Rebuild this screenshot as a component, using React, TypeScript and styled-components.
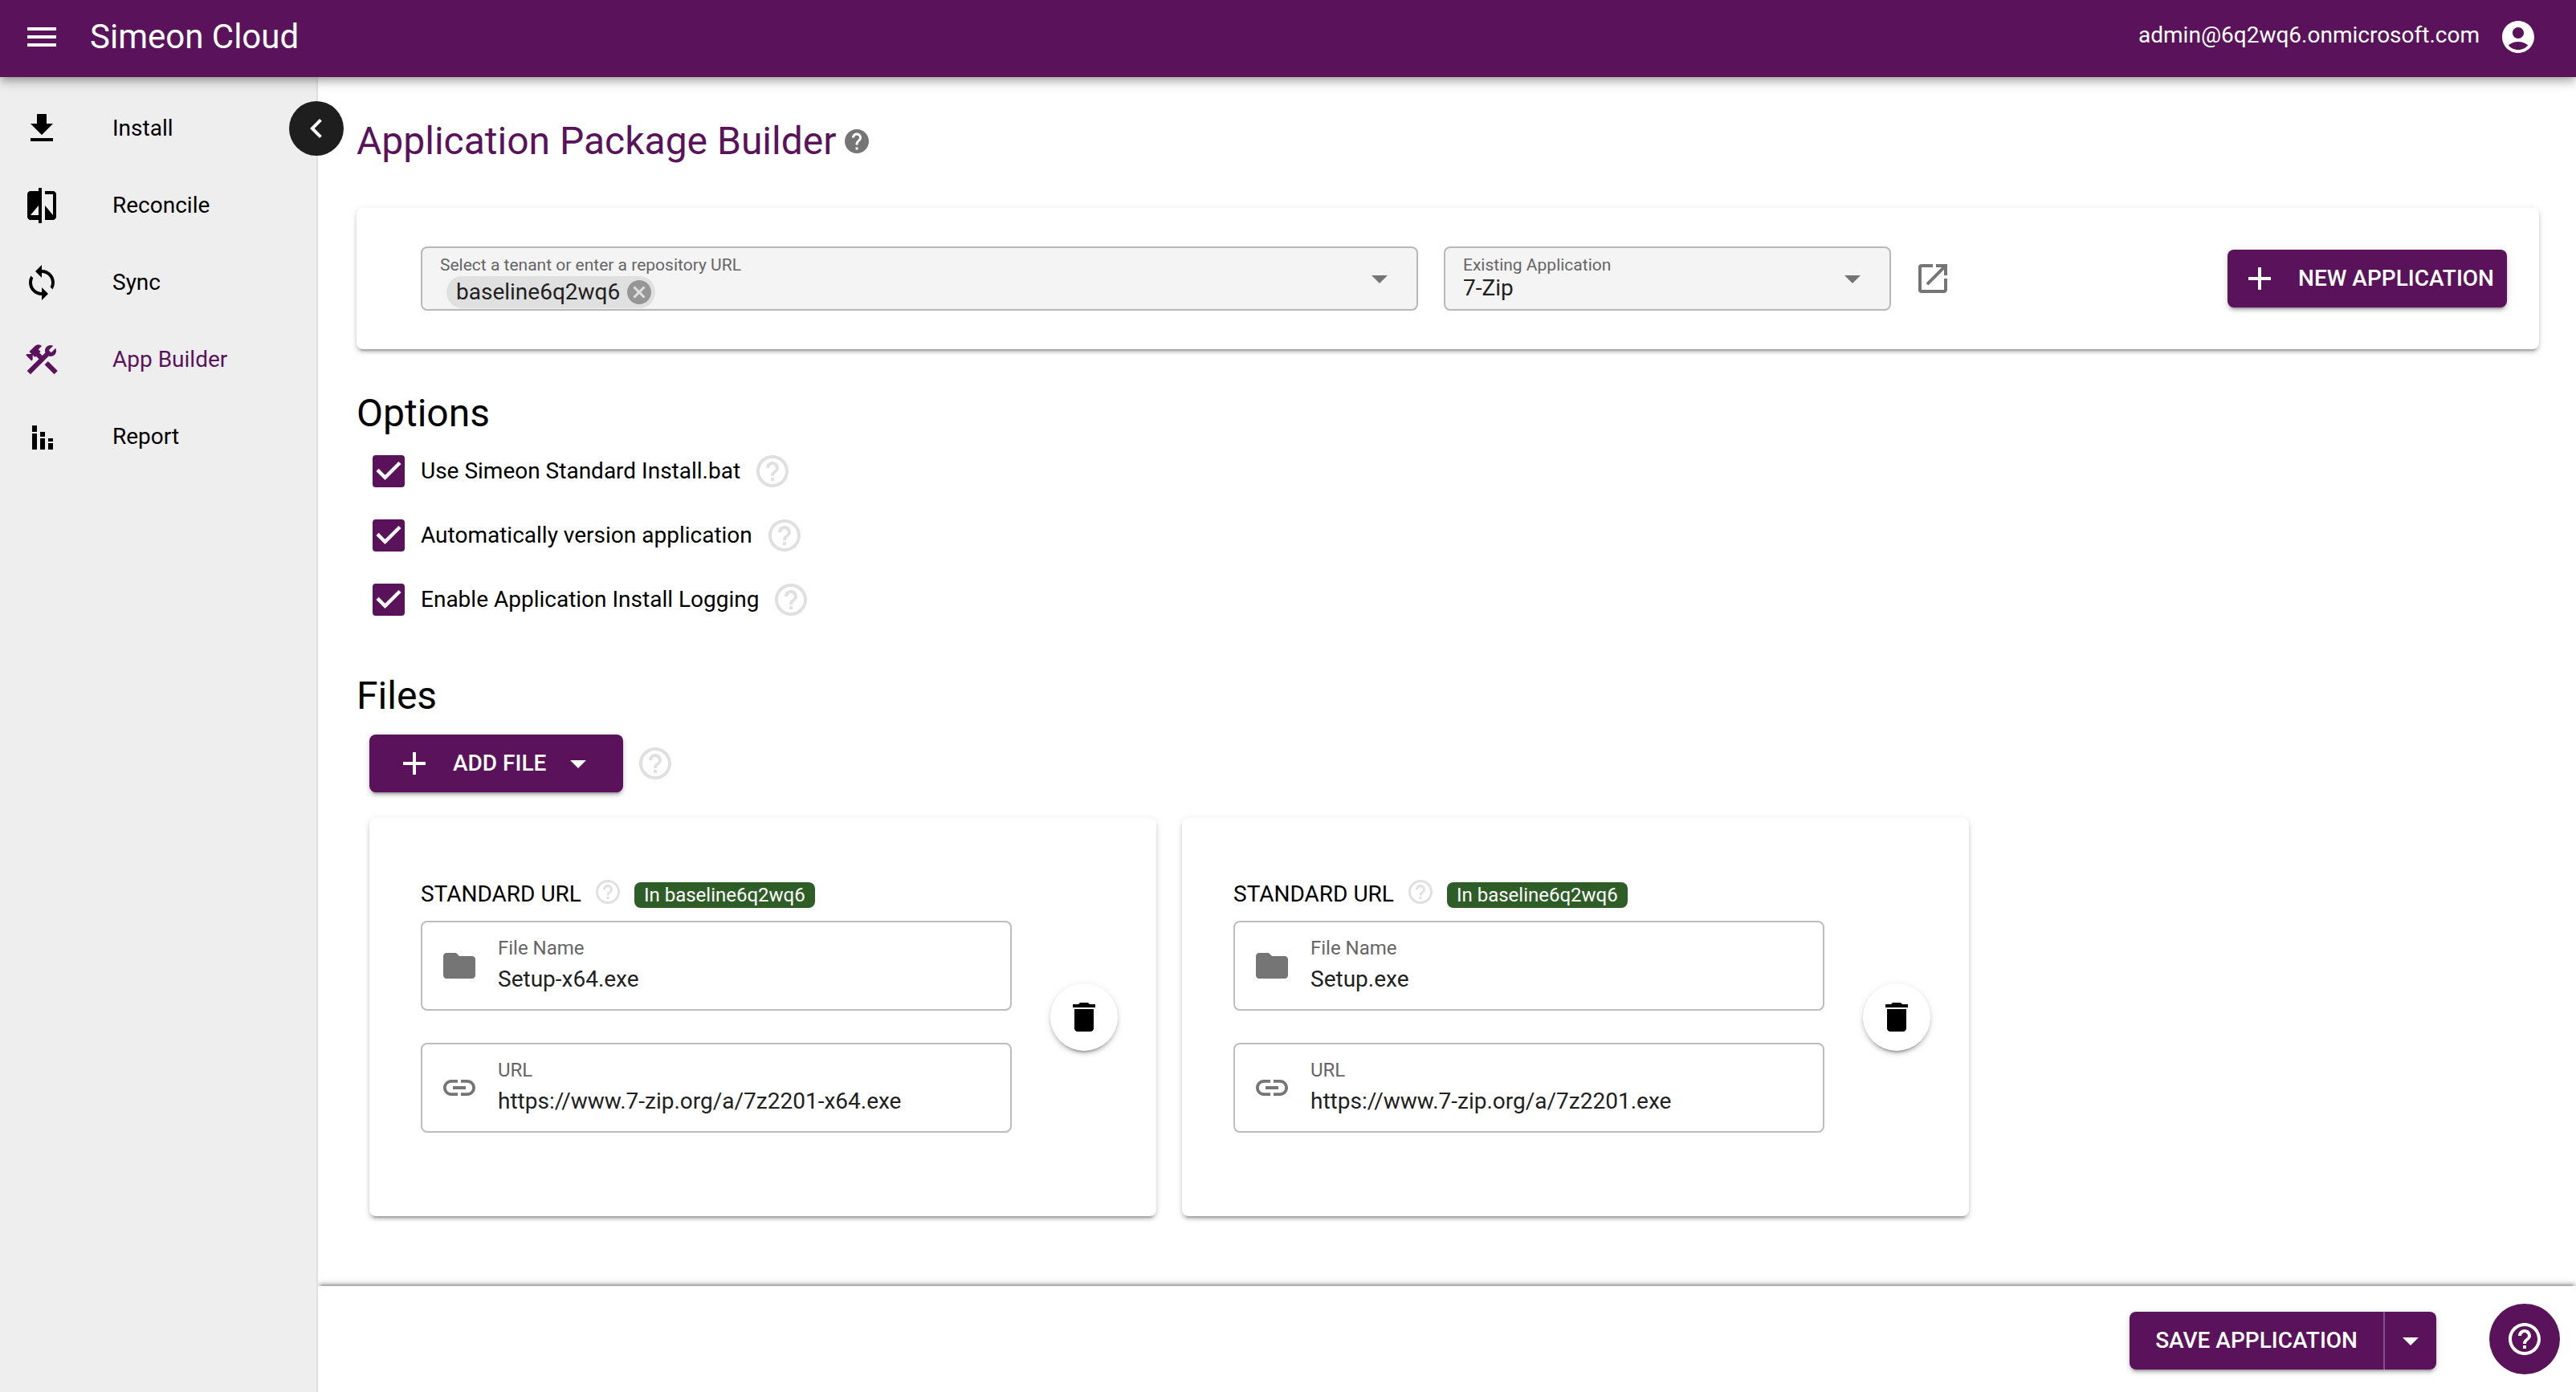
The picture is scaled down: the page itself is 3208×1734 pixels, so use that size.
import React, { useId, useState } from "react";
import styled, { createGlobalStyle, css } from "styled-components";
import {
  MdAccountCircle,
  MdAdd,
  MdArrowDropDown,
  MdCancel,
  MdChevronLeft,
  MdCompare,
  MdConstruction,
  MdDelete,
  MdFolder,
  MdHelp,
  MdHelpOutline,
  MdLink,
  MdMenu,
  MdOpenInNew,
  MdSync,
} from "react-icons/md";

const purple = "#5a135b";
const font = `Roboto, "Liberation Sans", sans-serif`;
const raised =
  "0 6px 2px -4px rgba(0,0,0,.2), 0 4px 4px 0 rgba(0,0,0,.14), 0 2px 10px 0 rgba(0,0,0,.12)";

const GlobalStyle = createGlobalStyle`
  *, *::before, *::after { box-sizing: border-box; }
  body { margin: 0; background: #fff; color: #000; font: 400 28px/36px ${font}; }
  svg { display: block; flex: none; }
  button, input, select { font: inherit; color: inherit; }
  button { cursor: pointer; }
`;

const Page = styled.div`
  min-height: 100vh;
  display: flex;
  flex-direction: column;
`;

const AppBar = styled.header`
  position: sticky;
  top: 0;
  z-index: 2;
  height: 96px;
  flex: none;
  display: flex;
  align-items: center;
  padding: 0 48px 4px 28px;
  background: ${purple};
  color: #fff;
  box-shadow: 0 4px 8px -2px rgba(0, 0, 0, 0.2), 0 8px 10px 0 rgba(0, 0, 0, 0.14),
    0 2px 20px 0 rgba(0, 0, 0, 0.12);
`;

const BareButton = styled.button`
  display: flex;
  padding: 0;
  border: 0;
  background: none;
`;

const Brand = styled.span`
  margin-left: 36px;
  font-size: 42px;
  line-height: 56px;
`;

const Account = styled.div`
  margin-left: auto;
  display: flex;
  align-items: center;
  gap: 24px;
`;

const Email = styled.span`
  padding-bottom: 4px;
`;

const Body = styled.div`
  flex: 1;
  display: flex;
`;

const Sidebar = styled.aside`
  position: relative;
  width: 396px;
  flex: none;
  padding-top: 16px;
  background: #eee;
  border-right: 2px solid #e0e0e0;
`;

const NavLink = styled.a<{ $active?: boolean }>`
  height: 96px;
  display: flex;
  align-items: center;
  gap: 64px;
  padding: 0 28px;
  color: ${(p) => (p.$active ? purple : "#000")};
  text-decoration: none;
`;

const CollapseButton = styled.button`
  position: absolute;
  top: 30px;
  right: -34px;
  z-index: 1;
  width: 68px;
  height: 68px;
  display: grid;
  place-items: center;
  padding: 0;
  border: 0;
  border-radius: 50%;
  background: #1e1e1e;
  color: #fff;
`;

const Workspace = styled.div`
  flex: 1;
  min-width: 0;
  display: flex;
  flex-direction: column;
`;

const Main = styled.main`
  flex: 1;
  padding: 48px 46px 48px 48px;
`;

const TitleRow = styled.div`
  display: flex;
  align-items: center;
  gap: 8px;
  margin-bottom: 51px;
  color: #757575;
`;

const Title = styled.h1`
  margin: 0;
  font-size: 48px;
  line-height: 64px;
  font-weight: 400;
  color: ${purple};
`;

const SectionTitle = styled.h2`
  margin: 48px 0 0;
  font-size: 48px;
  line-height: 64px;
  font-weight: 400;
`;

const surface = css`
  background: #fff;
  border-radius: 8px;
  box-shadow: ${raised};
`;

const Picker = styled.section`
  ${surface}
  display: flex;
  align-items: center;
  padding: 48px 40px 48px 80px;
`;

const PickerField = styled.div<{ $basis: number }>`
  flex: 0 1 ${(p) => p.$basis}px;
  min-width: 0;
  height: 80px;
  display: flex;
  align-items: center;
  padding: 0 22px;
  border: 2px solid #b8b8b8;
  border-radius: 8px;
  background: #f4f4f4;
  color: #757575;

  & + & {
    margin-left: 32px;
  }
`;

const PickerText = styled.div`
  flex: 1;
  min-width: 0;
  align-self: flex-start;
  display: flex;
  flex-direction: column;
  padding-top: 7px;
`;

const PickerLabel = styled.label`
  font-size: 21px;
  line-height: 28px;
  color: #666;
`;

const ChipRow = styled.div`
  display: flex;
  padding-left: 8px;
`;

const Chip = styled.span`
  height: 40px;
  display: flex;
  align-items: center;
  gap: 6px;
  padding: 0 2px 0 12px;
  border-radius: 20px;
  background: #e0e0e0;
  color: #212121;
`;

const ChipRemove = styled(BareButton)`
  color: #969696;
`;

const textControl = css`
  min-width: 0;
  padding: 0;
  border: 0;
  outline: 0;
  background: none;
  color: #212121;
`;

const ChipInput = styled.input`
  ${textControl}
  flex: 1;
  height: 40px;
`;

const PlainSelect = styled.select`
  ${textControl}
  appearance: none;
  height: 30px;
  line-height: 30px;
`;

const OpenLink = styled.a`
  margin-left: 28px;
  color: #757575;
`;

const Button = styled.button<{ $wide?: boolean }>`
  height: 72px;
  display: flex;
  align-items: center;
  gap: 24px;
  padding: 0 ${(p) => (p.$wide ? 32 : 16)}px;
  border: 0;
  border-radius: 8px;
  background: ${purple};
  color: #fff;
  font-weight: 500;
  white-space: nowrap;
  box-shadow: ${raised};
`;

const NewButton = styled(Button)`
  margin-left: auto;
`;

const WithCaret = styled.span`
  display: flex;
  align-items: center;
  gap: 16px;
`;

const OptionRow = styled.div`
  height: 80px;
  display: flex;
  align-items: center;
  gap: 16px;
  padding-left: 20px;
`;

const OptionLabel = styled.label`
  display: flex;
  align-items: center;
  gap: 20px;
`;

const Tick = styled.span`
  display: grid;
  color: #fff;

  > * {
    grid-area: 1 / 1;
  }

  svg {
    pointer-events: none;
  }
`;

const TickInput = styled.input`
  appearance: none;
  width: 40px;
  height: 40px;
  margin: 0;
  border: 4px solid #757575;
  border-radius: 4px;

  &:checked {
    border-color: ${purple};
    background: ${purple};
  }
`;

const Hint = styled(BareButton)`
  color: #e0e0e0;
`;

const AddRow = styled.div`
  display: flex;
  align-items: center;
  gap: 16px;
  padding: 16px 0 32px 16px;
`;

const FileList = styled.div`
  display: flex;
  gap: 32px;
  padding-left: 16px;
`;

const FileCard = styled.article`
  ${surface}
  flex: 0 1 980px;
  min-width: 0;
  display: flex;
  align-items: center;
  gap: 48px;
  padding: 72px 48px 72px 64px;
`;

const FileFields = styled.div`
  flex: 1;
  min-width: 0;
  display: flex;
  flex-direction: column;
  gap: 40px;
  padding-bottom: 32px;
`;

const FileHead = styled.div`
  height: 40px;
  display: flex;
  align-items: flex-end;
  gap: 15px;
  margin-bottom: -24px;
  line-height: 34px;

  ${Hint} {
    align-self: center;
  }
`;

const Badge = styled.span`
  padding: 0 12px;
  border-radius: 8px;
  background: #2f5d28;
  color: #fff;
  font-size: 24px;
  line-height: 32px;
`;

const FieldBox = styled.div`
  height: 112px;
  display: flex;
  align-items: center;
  gap: 24px;
  padding: 0 22px;
  border: 2px solid #bdbdbd;
  border-radius: 8px;
  color: #757575;
`;

const FieldText = styled.div`
  flex: 1;
  min-width: 0;
  align-self: flex-start;
  display: flex;
  flex-direction: column;
  padding-top: 14px;
`;

const FieldLabel = styled.label`
  font-size: 24px;
  line-height: 36px;
  color: #666;
`;

const FieldInput = styled.input`
  ${textControl}
  height: 40px;
`;

const DeleteButton = styled.button`
  width: 84px;
  height: 84px;
  flex: none;
  display: grid;
  place-items: center;
  padding: 0;
  border: 0;
  border-radius: 50%;
  background: #fff;
  color: #000;
  box-shadow: ${raised};
`;

const ActionBar = styled.footer`
  height: 132px;
  display: flex;
  align-items: center;
  justify-content: flex-end;
  padding: 4px 174px 0 48px;
  background: #fff;
  box-shadow: 0 -6px 2px -4px rgba(0, 0, 0, 0.2), 0 -4px 4px 0 rgba(0, 0, 0, 0.14),
    0 -2px 10px 0 rgba(0, 0, 0, 0.12);
`;

const SplitButton = styled.div`
  display: flex;
  border-radius: 8px;
  box-shadow: ${raised};
`;

const SplitMain = styled(Button)`
  border-right: 2px solid #83508a;
  border-radius: 8px 0 0 8px;
  box-shadow: none;
`;

const SplitCaret = styled(Button)`
  padding: 0 8px;
  border-radius: 0 8px 8px 0;
  box-shadow: none;
`;

const HelpFab = styled.button`
  position: fixed;
  right: 20px;
  bottom: 22px;
  z-index: 3;
  width: 88px;
  height: 88px;
  display: grid;
  place-items: center;
  padding: 0;
  border: 0;
  border-radius: 50%;
  background: ${purple};
  color: #fff;
`;

function InstallIcon({ size }: { size: number }) {
  return (
    <svg width={size} height={size} viewBox="0 0 24 24" fill="currentColor" aria-hidden="true">
      <path d="M19 9h-4V3H9v6H5l7 7 7-7zM5 18v2h14v-2H5z" />
    </svg>
  );
}

function ReportIcon({ size }: { size: number }) {
  return (
    <svg width={size} height={size} viewBox="0 0 24 24" fill="currentColor" aria-hidden="true">
      <path d="M6 10h3v10H6zM6 5h3v4H6zM11 13h3v7h-3zM11 9h3v3h-3zM16 16h3v4h-3zM16 13h3v2h-3z" />
    </svg>
  );
}

const navItems = [
  { label: "Install", Icon: InstallIcon },
  { label: "Reconcile", Icon: MdCompare },
  { label: "Sync", Icon: MdSync },
  { label: "App Builder", Icon: MdConstruction, active: true },
  { label: "Report", Icon: ReportIcon },
];

const options = [
  "Use Simeon Standard Install.bat",
  "Automatically version application",
  "Enable Application Install Logging",
];

const files = [
  { name: "Setup-x64.exe", url: "https://www.7-zip.org/a/7z2201-x64.exe" },
  { name: "Setup.exe", url: "https://www.7-zip.org/a/7z2201.exe" },
];

function Help({ topic, size = 48 }: { topic: string; size?: number }) {
  return (
    <Hint type="button" aria-label={`Help: ${topic}`}>
      <MdHelpOutline size={size} />
    </Hint>
  );
}

function Option({ label }: { label: string }) {
  const [checked, setChecked] = useState(true);
  return (
    <OptionRow>
      <OptionLabel>
        <Tick>
          <TickInput
            type="checkbox"
            checked={checked}
            onChange={(e) => setChecked(e.target.checked)}
          />
          {checked && (
            <svg width="40" height="40" viewBox="3 3 18 18" fill="currentColor" aria-hidden="true">
              <path d="M10 17l-5-5 1.41-1.41L10 14.17l7.59-7.59L19 8l-9 9z" />
            </svg>
          )}
        </Tick>
        {label}
      </OptionLabel>
      <Help topic={label} />
    </OptionRow>
  );
}

function Field({ label, value, icon }: { label: string; value: string; icon: React.ReactNode }) {
  const id = useId();
  return (
    <FieldBox>
      {icon}
      <FieldText>
        <FieldLabel htmlFor={id}>{label}</FieldLabel>
        <FieldInput id={id} type="text" defaultValue={value} />
      </FieldText>
    </FieldBox>
  );
}

export default function App() {
  return (
    <Page>
      <GlobalStyle />
      <AppBar>
        <BareButton type="button" aria-label="Menu">
          <MdMenu size={48} color="#fff" />
        </BareButton>
        <Brand>Simeon Cloud</Brand>
        <Account>
          <Email>admin@6q2wq6.onmicrosoft.com</Email>
          <BareButton type="button" aria-label="Account">
            <MdAccountCircle size={48} color="#fff" />
          </BareButton>
        </Account>
      </AppBar>

      <Body>
        <Sidebar>
          <nav>
            {navItems.map(({ label, Icon, active }) => (
              <NavLink key={label} href="#" $active={active}>
                <Icon size={48} />
                {label}
              </NavLink>
            ))}
          </nav>
          <CollapseButton type="button" aria-label="Collapse menu">
            <MdChevronLeft size={48} />
          </CollapseButton>
        </Sidebar>

        <Workspace>
          <Main>
            <TitleRow>
              <Title>Application Package Builder</Title>
              <MdHelp size={36} />
            </TitleRow>

            <Picker>
              <PickerField $basis={1242}>
                <PickerText>
                  <PickerLabel htmlFor="tenant">Select a tenant or enter a repository URL</PickerLabel>
                  <ChipRow>
                    <Chip>
                      baseline6q2wq6
                      <ChipRemove type="button" aria-label="Remove baseline6q2wq6">
                        <MdCancel size={36} />
                      </ChipRemove>
                    </Chip>
                    <ChipInput id="tenant" type="text" />
                  </ChipRow>
                </PickerText>
                <MdArrowDropDown size={48} />
              </PickerField>
              <PickerField $basis={557}>
                <PickerText>
                  <PickerLabel htmlFor="application">Existing Application</PickerLabel>
                  <PlainSelect id="application" defaultValue="7-Zip">
                    <option>7-Zip</option>
                  </PlainSelect>
                </PickerText>
                <MdArrowDropDown size={48} />
              </PickerField>
              <OpenLink href="#" aria-label="Open application">
                <MdOpenInNew size={48} />
              </OpenLink>
              <NewButton type="button">
                <MdAdd size={48} />
                NEW APPLICATION
              </NewButton>
            </Picker>

            <SectionTitle>Options</SectionTitle>
            {options.map((label) => (
              <Option key={label} label={label} />
            ))}

            <SectionTitle>Files</SectionTitle>
            <AddRow>
              <Button type="button" $wide>
                <MdAdd size={48} />
                <WithCaret>
                  ADD FILE
                  <MdArrowDropDown size={48} />
                </WithCaret>
              </Button>
              <Help topic="Files" />
            </AddRow>
            <FileList>
              {files.map((file) => (
                <FileCard key={file.name}>
                  <FileFields>
                    <FileHead>
                      <span>STANDARD URL</span>
                      <Help topic="Standard URL" size={36} />
                      <Badge>In baseline6q2wq6</Badge>
                    </FileHead>
                    <Field label="File Name" value={file.name} icon={<MdFolder size={48} />} />
                    <Field label="URL" value={file.url} icon={<MdLink size={48} />} />
                  </FileFields>
                  <DeleteButton type="button" aria-label={`Delete ${file.name}`}>
                    <MdDelete size={48} />
                  </DeleteButton>
                </FileCard>
              ))}
            </FileList>
          </Main>

          <ActionBar>
            <SplitButton>
              <SplitMain type="button" $wide>
                SAVE APPLICATION
              </SplitMain>
              <SplitCaret type="button" aria-label="More save options">
                <MdArrowDropDown size={48} />
              </SplitCaret>
            </SplitButton>
          </ActionBar>
        </Workspace>
      </Body>

      <HelpFab type="button" aria-label="Help">
        <MdHelpOutline size={48} />
      </HelpFab>
    </Page>
  );
}
